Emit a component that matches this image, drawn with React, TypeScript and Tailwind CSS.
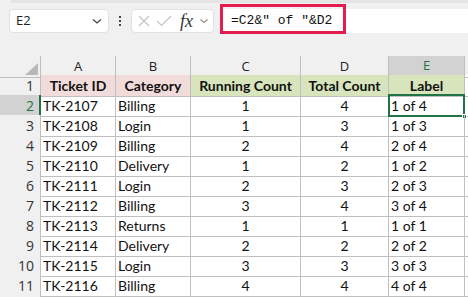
import React from "react";

const rows = [
  ["TK-2107", "Billing", "1", "4"],
  ["TK-2108", "Login", "1", "3"],
  ["TK-2109", "Billing", "2", "4"],
  ["TK-2110", "Delivery", "1", "2"],
  ["TK-2111", "Login", "2", "3"],
  ["TK-2112", "Billing", "3", "4"],
  ["TK-2113", "Returns", "1", "1"],
  ["TK-2114", "Delivery", "2", "2"],
  ["TK-2115", "Login", "3", "3"],
  ["TK-2116", "Billing", "4", "4"],
];

const cols = ["A", "B", "C", "D", "E"];

const cellFont = { fontFamily: "Lato, 'Open Sans', sans-serif" };
const uiFont = { fontFamily: "'Open Sans', 'Noto Sans', sans-serif" };

function Toolbar() {
  return (
    <div className="h-[42px] bg-[#f0f0f0] flex items-center relative">
      <div className="absolute top-0 left-[10px] right-0 h-[3px] bg-[#e4e4e4] rounded-bl" />
      {/* name box */}
      <div className="ml-[9px] w-[100px] h-[24px] bg-white rounded-[4px] border border-[#e2e2e2] flex items-center justify-between pl-[6px] pr-[5px]">
        <span className="text-[13px] text-[#222]" style={uiFont}>E2</span>
        <svg width="12" height="12" viewBox="0 0 12 12">
          <path d="M2 4.5 L6 8 L10 4.5" fill="none" stroke="#444" strokeWidth="1.3" />
        </svg>
      </div>
      {/* dots */}
      <div className="w-[22px] flex flex-col items-center gap-[2px]">
        <div className="w-[2px] h-[2px] bg-[#444]" />
        <div className="w-[2px] h-[2px] bg-[#444]" />
        <div className="w-[2px] h-[2px] bg-[#444]" />
      </div>
      {/* function box */}
      <div className="w-[83px] h-[24px] bg-white rounded-[4px] border border-[#e2e2e2] flex items-center pl-[6px] gap-[6px]">
        <svg width="12" height="12" viewBox="0 0 12 12">
          <path d="M1 1 L11 11 M11 1 L1 11" stroke="#c4c4c4" strokeWidth="1.2" />
        </svg>
        <svg width="16" height="12" viewBox="0 0 16 12">
          <path d="M1 6 L5.5 10.5 L15 1" fill="none" stroke="#c4c4c4" strokeWidth="1.2" />
        </svg>
        <span className="text-[18px] italic text-[#333] leading-none ml-[2px]" style={{ fontFamily: "'Liberation Serif', serif" }}>
          fx
        </span>
        <svg width="10" height="10" viewBox="0 0 10 10">
          <path d="M1.5 3.5 L5 6.5 L8.5 3.5" fill="none" stroke="#888" strokeWidth="1.1" />
        </svg>
      </div>
      {/* formula bar */}
      <div className="ml-[7px] flex-1 h-[24px] bg-white flex items-center relative">
        <div className="absolute left-[-1px] top-[-5px] w-[126px] h-[30px] border-[3px] border-[#e31b4e]" />
        <span className="ml-[10px] text-[13px] text-[#111] whitespace-pre" style={{ fontFamily: "'Liberation Mono', monospace" }}>
          =C2&amp;" of "&amp;D2
        </span>
      </div>
    </div>
  );
}

export default function App() {
  const gridCols = "grid grid-cols-[41px_75px_75px_110px_88px_76px_1fr]";
  return (
    <div className="w-[468px] h-[297px] overflow-hidden bg-white">
      <Toolbar />
      <div className="h-[14px] bg-[#f0f0f0]" />
      {/* column header */}
      <div className={`${gridCols} h-[19px] bg-[#f0f0f0]`}>
        <div className="border-r border-b border-[#bfbfbf] relative">
          <svg className="absolute right-[2px] bottom-[2px]" width="13" height="12" viewBox="0 0 13 12">
            <polygon points="13,0 13,12 0,12" fill="#b9b9b9" />
          </svg>
        </div>
        {cols.map((c) => (
          <div
            key={c}
            className={
              c === "E"
                ? "bg-[#d2d2d2] border-r border-[#bfbfbf] border-b-2 border-b-[#217346] flex items-center justify-center text-[13px] text-[#217346]"
                : "border-r border-b border-[#bfbfbf] flex items-center justify-center text-[13px] text-[#222]"
            }
            style={uiFont}
          >
            {c}
          </div>
        ))}
        <div className="border-b border-[#bfbfbf]" />
      </div>
      {/* row 1 headers */}
      <div className={`${gridCols} h-[20px]`} style={cellFont}>
        <div className="bg-[#f0f0f0] border-r border-b border-[#bfbfbf] flex items-center justify-end pr-[6px] text-[14px] text-[#333]" style={uiFont}>
          1
        </div>
        <div className="bg-[#f2dcdb] border-r border-b border-[#bfbfbf] flex items-center justify-center text-[14px] font-bold text-[#111]">Ticket ID</div>
        <div className="bg-[#f2dcdb] border-r border-b border-[#bfbfbf] flex items-center justify-center text-[14px] font-bold text-[#111]">Category</div>
        <div className="bg-[#d8e4bc] border-r border-b border-[#bfbfbf] flex items-center justify-center text-[14px] font-bold text-[#111]">Running Count</div>
        <div className="bg-[#d8e4bc] border-r border-b border-[#bfbfbf] flex items-center justify-center text-[14px] font-bold text-[#111]">Total Count</div>
        <div className="bg-[#d8e4bc] border-r border-b border-[#bfbfbf] flex items-center justify-center text-[14px] font-bold text-[#111]">Label</div>
        <div className="border-b border-[#bfbfbf]" />
      </div>
      {rows.map((r, i) => {
        const n = i + 2;
        const sel = n === 2;
        return (
          <div key={n} className={`${gridCols} h-[20px] text-[14px] text-[#111]`} style={cellFont}>
            <div
              className={
                sel
                  ? "bg-[#d2d2d2] border-r-2 border-r-[#217346] border-b border-[#bfbfbf] flex items-center justify-end pr-[5px] text-[14px] text-[#217346]"
                  : "bg-[#f0f0f0] border-r border-b border-[#bfbfbf] flex items-center justify-end pr-[6px] text-[14px] text-[#333]"
              }
              style={uiFont}
            >
              {n}
            </div>
            <div className="border-r border-b border-[#bfbfbf] flex items-center pl-[2px]">{r[0]}</div>
            <div className="border-r border-b border-[#bfbfbf] flex items-center pl-[2px]">{r[1]}</div>
            <div className="border-r border-b border-[#bfbfbf] flex items-center justify-center">{r[2]}</div>
            <div className="border-r border-b border-[#bfbfbf] flex items-center justify-center">{r[3]}</div>
            <div className="border-r border-b border-[#bfbfbf] flex items-center pl-[2px] relative">
              {`${r[2]} of ${r[3]}`}
              {sel && (
                <>
                  <div className="absolute left-[-1px] top-[-1px] right-[-1px] bottom-[-1px] border-2 border-[#217346]" />
                  <div className="absolute right-[-3px] bottom-[-3px] w-[5px] h-[5px] bg-[#217346] border border-white" />
                </>
              )}
            </div>
            <div className="border-b border-[#bfbfbf]" />
          </div>
        );
      })}
      <div className={`${gridCols} h-[20px]`}>
        <div className="bg-[#f0f0f0] border-r border-[#bfbfbf]" />
        <div className="border-r border-[#bfbfbf]" />
        <div className="border-r border-[#bfbfbf]" />
        <div className="border-r border-[#bfbfbf]" />
        <div className="border-r border-[#bfbfbf]" />
        <div className="border-r border-[#bfbfbf]" />
        <div />
      </div>
    </div>
  );
}
